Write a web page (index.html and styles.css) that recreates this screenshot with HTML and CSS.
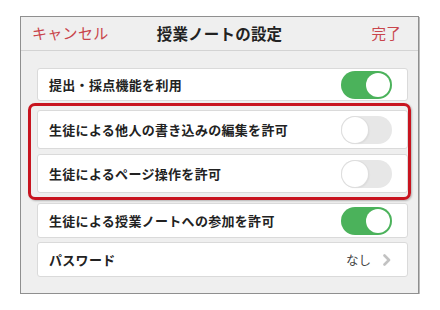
FILE: index.html
```html
<!DOCTYPE html>
<html lang="ja">
<head>
<meta charset="utf-8">
<link rel="stylesheet" href="styles.css">
</head>
<body>
<div class="panel">
  <div class="header">
    <span class="link left">キャンセル</span>
    <span class="title">授業ノートの設定</span>
    <span class="link right">完了</span>
  </div>
  <div class="content">
    <div class="row r1">
      <span class="label">提出・採点機能を利用</span>
      <span class="toggle on"><span class="knob"></span></span>
    </div>
    <div class="highlight">
      <div class="row tall">
        <span class="label">生徒による他人の書き込みの編集を許可</span>
        <span class="toggle"><span class="knob"></span></span>
      </div>
      <div class="row tall">
        <span class="label">生徒によるページ操作を許可</span>
        <span class="toggle"><span class="knob"></span></span>
      </div>
    </div>
    <div class="row">
      <span class="label">生徒による授業ノートへの参加を許可</span>
      <span class="toggle on"><span class="knob"></span></span>
    </div>
    <div class="row r5">
      <span class="label">パスワード</span>
      <span class="value">なし
        <svg class="chev" width="8" height="12" viewBox="0 0 8 12"><path d="M1.5 1.5 L6 6 L1.5 10.5" fill="none" stroke="#c2c2c2" stroke-width="2.6" stroke-linecap="round" stroke-linejoin="round"/></svg>
      </span>
    </div>
  </div>
</div>
</body>
</html>
```

FILE: styles.css
```css
* { box-sizing: border-box; }
html, body { margin: 0; background: #ffffff; }
body {
  padding: 16px 0 0 20px;
  font-family: "Noto Sans CJK JP", "Noto Sans", sans-serif;
  color: #222;
}
.panel {
  width: 399px;
  height: 278px;
  background: #efefef;
  border: 1px solid #8f8f8f;
  box-shadow: 1px 1px 0 #bdbdbd;
}
.header {
  height: 34px;
  border-bottom: 1px solid #d3d3d3;
  display: grid;
  grid-template-columns: 1fr auto 1fr;
  align-items: center;
  padding: 0 17px 2px 11px;
}
.link {
  color: #c9454c;
  font-size: 15px;
  letter-spacing: 0.3px;
}
.link.right { justify-self: end; font-size: 14.5px; }
.title {
  font-size: 15.5px;
  font-weight: 700;
  color: #222;
  margin-left: 6px;
  letter-spacing: 0.2px;
}
.content {
  padding: 17px 10px 0 16px;
  display: flex;
  flex-direction: column;
}
.row {
  background: #fff;
  border: 1px solid #dadada;
  border-radius: 3px;
  height: 35px;
  display: flex;
  align-items: center;
  justify-content: space-between;
  padding: 0 15px 0 11px;
}
.row.r1 { height: 33px; }
.row.tall { height: 39px; }
.row.r5 { margin-top: 4px; }
.label {
  font-size: 13px;
  font-weight: 700;
  letter-spacing: 0.3px;
}
.highlight {
  margin: 2px -3px 3px -9px;
  border: 3px solid #c8141f;
  border-radius: 7px;
  padding: 4px 0 4px 6px;
  display: flex;
  flex-direction: column;
  gap: 5px;
  box-shadow: 1px 1px 2px rgba(0,0,0,0.25);
}
.toggle {
  width: 51px;
  height: 28px;
  border-radius: 14px;
  background: #e7e7e7;
  position: relative;
  flex: none;
}
.toggle .knob {
  position: absolute;
  top: 1px;
  left: 1px;
  width: 26px;
  height: 26px;
  border-radius: 50%;
  background: #fff;
  box-shadow: 0 0 0 1px #dedede, 1px 1px 2px rgba(0,0,0,0.08);
}
.toggle.on { background: #4bb25b; }
.toggle.on .knob {
  left: auto;
  right: 2px;
  top: 2px;
  width: 24px;
  height: 24px;
  box-shadow: none;
}
.value {
  display: flex;
  align-items: center;
  gap: 12px;
  font-size: 12.5px;
  color: #444;
  margin-right: 1px;
}
.chev { display: block; }
```
